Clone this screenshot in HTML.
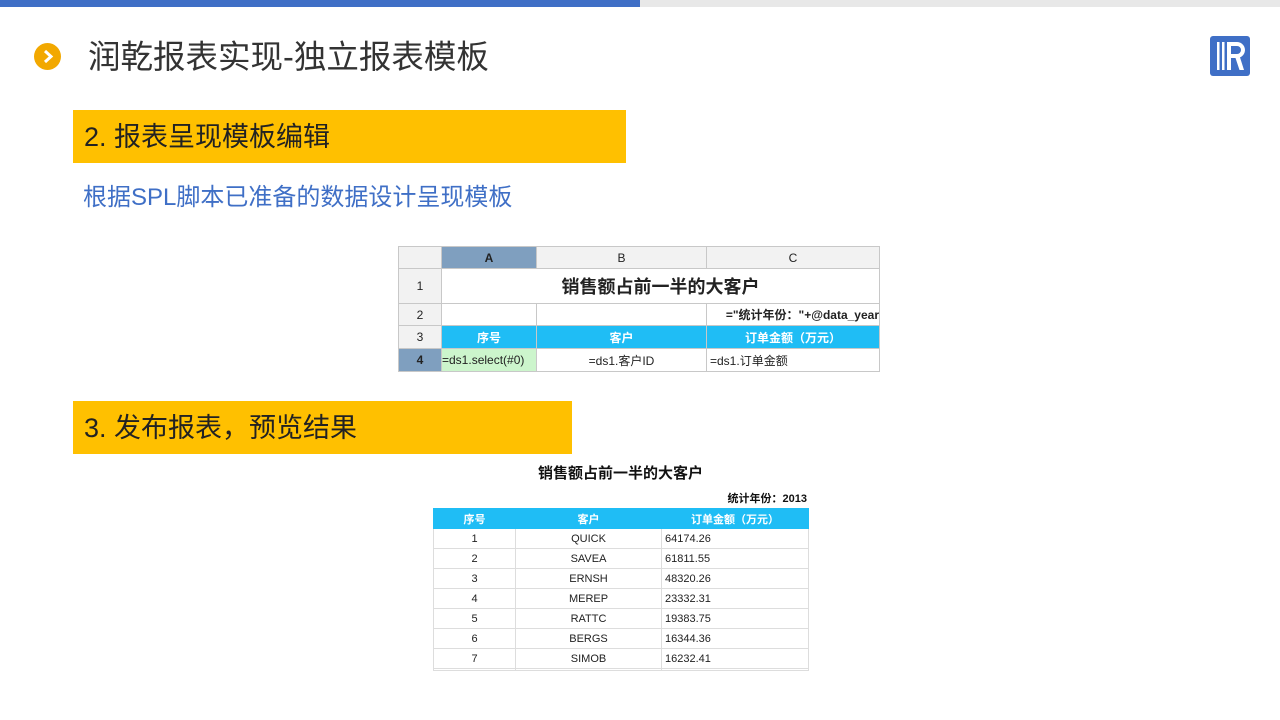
<!DOCTYPE html>
<html><head><meta charset="utf-8"><style>
*{margin:0;padding:0;box-sizing:border-box}
body{width:1280px;height:720px;background:#fff;position:relative;overflow:hidden;font-family:"Liberation Sans","Noto Sans CJK SC",sans-serif}
.a{position:absolute}
table{border-collapse:collapse;position:absolute;table-layout:fixed}
.ss td{border:1px solid #c8c8c8;font-size:12px;text-align:center;color:#222;padding:0;overflow:hidden;white-space:nowrap}
.rp td{border:1px solid #ddd;font-size:11px;text-align:center;color:#222;padding:0;white-space:nowrap}
</style></head><body>
<div class="a" style="left:0;top:0;width:640px;height:7px;background:#3f6fc6"></div>
<div class="a" style="left:640px;top:0;width:640px;height:7px;background:#e8e8e8"></div>
<div class="a" style="left:34px;top:43px;width:27px;height:27px;border-radius:50%;background:#f2a800"></div>
<svg class="a" style="left:34px;top:43px" width="27" height="27"><path d="M11 8l6 5.5-6 5.5" stroke="#fff" stroke-width="3" fill="none"/></svg>
<div class="a" style="left:88px;top:35px;font-size:32.5px;color:#333;line-height:44px">润乾报表实现-独立报表模板</div>
<svg class="a" style="left:1210px;top:36px" width="40" height="40" viewBox="0 0 40 40"><rect x="0" y="0" width="40" height="40" rx="3" fill="#3f6fc6"/><rect x="7" y="6" width="2.5" height="28" fill="#fff"/><rect x="12" y="6" width="2.5" height="28" fill="#fff"/><path d="M17 6h10a8 8 0 0 1 3 15.4l4 12.6h-4.5l-4-12h-4.5v-4h6a4 4 0 0 0 0-8h-6v24h-4z" fill="#fff"/></svg>
<div class="a" style="left:73px;top:110px;width:553px;height:53px;background:#ffc000"></div>
<div class="a" style="left:84px;top:117px;font-size:27px;color:#222;line-height:40px">2. 报表呈现模板编辑</div>
<div class="a" style="left:83px;top:182px;font-size:24px;color:#3f6fc6;line-height:32px">根据SPL脚本已准备的数据设计呈现模板</div>
<table class="ss" style="left:398px;top:246px;width:481px">
<colgroup><col style="width:43px"><col style="width:95px"><col style="width:170px"><col style="width:173px"></colgroup>
<tr style="height:22px;background:#f2f2f2"><td></td><td style="background:#7f9fbf;font-weight:bold">A</td><td>B</td><td>C</td></tr>
<tr style="height:35px"><td style="background:#f2f2f2">1</td><td colspan="3" style="font-size:18px;font-weight:bold">销售额占前一半的大客户</td></tr>
<tr style="height:22px"><td style="background:#f2f2f2">2</td><td></td><td></td><td style="font-weight:bold;text-align:right">="统计年份："+@data_year</td></tr>
<tr style="height:23px;background:#1fbdf5;color:#fff;font-weight:bold;font-size:13px"><td style="background:#f2f2f2;color:#222;font-weight:normal;font-size:12px">3</td><td style="color:#fff">序号</td><td style="color:#fff">客户</td><td style="color:#fff">订单金额（万元）</td></tr>
<tr style="height:23px"><td style="background:#7f9fbf;font-weight:bold">4</td><td style="background:#ccf5cc;text-align:left">=ds1.select(#0)</td><td>=ds1.客户ID</td><td style="text-align:left;padding-left:3px">=ds1.订单金额</td></tr>
</table>
<div class="a" style="left:73px;top:401px;width:499px;height:53px;background:#ffc000"></div>
<div class="a" style="left:84px;top:408px;font-size:27px;color:#222;line-height:40px">3. 发布报表，预览结果</div>
<div class="a" style="left:433px;top:462px;width:375px;text-align:center;font-size:15px;font-weight:bold;color:#111">销售额占前一半的大客户</div>
<div class="a" style="left:600px;top:490px;width:207px;text-align:right;font-size:11px;font-weight:bold;color:#111">统计年份：2013</div>
<table class="rp" style="left:433px;top:508px;width:375px">
<colgroup><col style="width:82px"><col style="width:146px"><col style="width:147px"></colgroup>
<tr style="height:20px;background:#1fbdf5"><td style="color:#fff;font-weight:bold;border-color:#1fbdf5">序号</td><td style="color:#fff;font-weight:bold;border-color:#1fbdf5">客户</td><td style="color:#fff;font-weight:bold;border-color:#1fbdf5">订单金额（万元）</td></tr>
<tr style="height:20px"><td>1</td><td>QUICK</td><td style="text-align:left;padding-left:3px">64174.26</td></tr>
<tr style="height:20px"><td>2</td><td>SAVEA</td><td style="text-align:left;padding-left:3px">61811.55</td></tr>
<tr style="height:20px"><td>3</td><td>ERNSH</td><td style="text-align:left;padding-left:3px">48320.26</td></tr>
<tr style="height:20px"><td>4</td><td>MEREP</td><td style="text-align:left;padding-left:3px">23332.31</td></tr>
<tr style="height:20px"><td>5</td><td>RATTC</td><td style="text-align:left;padding-left:3px">19383.75</td></tr>
<tr style="height:20px"><td>6</td><td>BERGS</td><td style="text-align:left;padding-left:3px">16344.36</td></tr>
<tr style="height:20px"><td>7</td><td>SIMOB</td><td style="text-align:left;padding-left:3px">16232.41</td></tr>
<tr style="height:2px"><td></td><td></td><td></td></tr>
</table>
</body></html>
